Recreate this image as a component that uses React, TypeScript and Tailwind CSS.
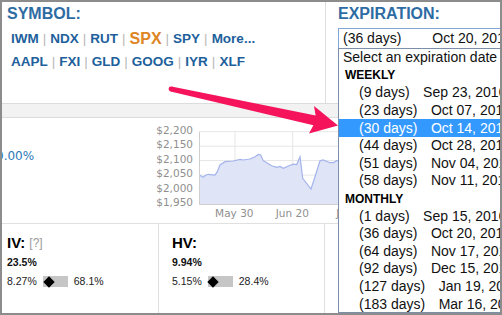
import React from 'react';

const row1 = ['IWM', 'NDX', 'RUT', 'SPX', 'SPY', 'More...'];
const row2 = ['AAPL', 'FXI', 'GLD', 'GOOG', 'IYR', 'XLF'];

const weekly = [
  { days: 9, date: 'Sep 23, 2016' },
  { days: 23, date: 'Oct 07, 2016' },
  { days: 30, date: 'Oct 14, 2016' },
  { days: 44, date: 'Oct 28, 2016' },
  { days: 51, date: 'Nov 04, 2016' },
  { days: 58, date: 'Nov 11, 2016' },
];

const monthly = [
  { days: 1, date: 'Sep 15, 2016' },
  { days: 36, date: 'Oct 20, 2016' },
  { days: 64, date: 'Nov 17, 2016' },
  { days: 92, date: 'Dec 15, 2016' },
  { days: 127, date: 'Jan 19, 2017' },
  { days: 183, date: 'Mar 16, 2017' },
];

const line =
  '199.3,175 203.3,177.3 205,175.5 208.3,174.3 215,175 217.3,171.7 220,165 225,161.7 233.3,161 240,159.3 243.3,160 246.7,159.5 250,159 255,156.7 258.3,154.5 260.7,155 263.3,160.7 266.7,162.7 271.7,165.7 276.7,167.3 280,166.5 283.3,168.3 288.3,166 293.3,164.2 296.7,164.5 300,156.7 302.7,178.3 311,189 315,176.7 320,160.7 323,160 330,162.7 333.3,162.7 336.7,160.7 345,160 365,161';

const gridY = [131.7, 146.2, 160.6, 175.1, 189.5, 204];
const yLabels = ['$2,200', '$2,150', '$2,100', '$2,050', '$2,000', '$1,950'];

function SymbolRow({ items }: { items: string[] }) {
  return (
    <div className="flex items-center h-[23px] leading-[23px] pl-[4px] text-[13.5px] font-bold text-[#215f9c]">
      {items.map((s, i) => (
        <React.Fragment key={s}>
          {i > 0 && <span className="mx-[4px] font-normal text-[#b8b8b8]">|</span>}
          <span className={s === 'SPX' ? 'text-[16px] text-[#de8623]' : ''}>{s}</span>
        </React.Fragment>
      ))}
    </div>
  );
}

function RangeBar({ pct }: { pct: number }) {
  return (
    <div className="relative w-[25px] h-[11px] bg-[#c6c6c6] mx-[6px]">
      <div
        className="absolute top-[1.5px] w-[8px] h-[8px] bg-black rotate-45"
        style={{ left: `calc(${pct}% - 4px)` }}
      />
    </div>
  );
}

function VolBlock({ label, help, value, low, high }: { label: string; help?: boolean; value: number; low: string; high: string }) {
  const pct = ((value - parseFloat(low)) / (parseFloat(high) - parseFloat(low))) * 100;
  return (
    <div className="pt-[9px]">
      <div className="h-[20px] flex items-center">
        <span className="text-[15px] font-bold text-black">{label}</span>
        {help && <span className="ml-[4px] text-[12px] text-[#9a9a9a]">[?]</span>}
      </div>
      <div className="h-[19px] flex items-center text-[10.5px] font-bold text-[#111]">{value}%</div>
      <div className="h-[19px] flex items-center text-[10.5px] text-[#222]">
        <span>{low}</span>
        <RangeBar pct={pct} />
        <span>{high}</span>
      </div>
    </div>
  );
}

function Option({ days, date, selected }: { days: number; date: string; selected?: boolean }) {
  return (
    <div
      className={`h-[17.6px] flex items-center pl-[20px] whitespace-nowrap ${
        selected ? 'bg-[#3399ff] text-white' : 'text-[#111]'
      }`}
    >
      <span>({days} days)</span>
      <span className="ml-[13.5px]">{date}</span>
    </div>
  );
}

export default function App() {
  return (
    <div
      className="relative w-[502px] h-[315px] overflow-hidden border-2 border-[#8c8c8c] bg-white"
      style={{ fontFamily: '"Liberation Sans", Arial, sans-serif' }}
    >
      {/* top: symbol + expiration */}
      <div className="flex h-[101px]">
        <div className="w-[324px] shrink-0 border-r border-[#dedede] pl-[5px] pt-[3px]">
          <div className="h-[18px] leading-[18px] text-[16px] font-bold text-[#2d6ca3]">SYMBOL:</div>
          <div className="mt-[4px]">
            <SymbolRow items={row1} />
            <SymbolRow items={row2} />
          </div>
        </div>
        <div className="flex-1 min-w-0 pl-[12px] pt-[3px]">
          <div className="h-[18px] leading-[18px] text-[16px] font-bold text-[#2d6ca3] whitespace-nowrap">EXPIRATION:</div>
          <div className="mt-[5px] w-[200px] h-[21px] border border-[#7ea6d8] flex items-center pl-[4px] text-[14px] text-[#111] whitespace-nowrap">
            <span>(36 days)</span>
            <span className="ml-[31px]">Oct 20, 2016</span>
          </div>
        </div>
      </div>

      {/* grey band */}
      <div className="h-[15px] bg-[#f2f2f2] border-t border-b border-[#dcdcdc]" />

      {/* middle: change + chart */}
      <div className="flex h-[105px]">
        <div className="w-[148px] shrink-0 pt-[31px]">
          <div
            className="-ml-[6px] text-[12px] leading-[14px] text-[#2a78b8]"
            style={{ fontFamily: '"DejaVu Sans", Verdana, sans-serif' }}
          >
            0.00%
          </div>
        </div>
        <svg width="215" height="105" viewBox="150 118 215 105" style={{ fontFamily: '"DejaVu Sans", Verdana, sans-serif' }}>
          {gridY.map((y) => (
            <line key={y} x1="199.5" x2="365" y1={y} y2={y} stroke="#e6e6e6" strokeWidth="1" />
          ))}
          {[235, 292.7, 350.4].map((x) => (
            <line key={x} x1={x} x2={x} y1="131.7" y2="204" stroke="#e6e6e6" strokeWidth="1" />
          ))}
          <polygon points={`${line} 365,204 199.3,204`} fill="#dfe4f7" />
          <polyline points={line} fill="none" stroke="#a3b3ec" strokeWidth="1.2" />
          <line x1="199.5" x2="199.5" y1="131.7" y2="204.5" stroke="#cfcfcf" />
          <line x1="199.5" x2="365" y1="204.5" y2="204.5" stroke="#cfcfcf" />
          {yLabels.map((t, i) => (
            <text key={t} x="193" y={gridY[i] + 2.2} textAnchor="end" fontSize="10.5" fill="#8f8f8f">
              {t}
            </text>
          ))}
          <text x="234.3" y="216.5" textAnchor="middle" fontSize="10.5" fill="#8f8f8f">May 30</text>
          <text x="292.3" y="216.5" textAnchor="middle" fontSize="10.5" fill="#8f8f8f">Jun 20</text>
          <text x="351" y="216.5" textAnchor="middle" fontSize="10.5" fill="#8f8f8f">Jul 11</text>
        </svg>
      </div>

      {/* bottom: IV / HV */}
      <div className="flex h-[90px] border-t border-[#e0e0e0]">
        <div className="w-[157px] shrink-0 border-r border-[#e0e0e0] pl-[5px]">
          <VolBlock label="IV:" help value={23.5} low="8.27%" high="68.1%" />
        </div>
        <div className="w-[166px] shrink-0 border-r border-[#e0e0e0] pl-[13px]">
          <VolBlock label="HV:" value={9.94} low="5.15%" high="28.4%" />
        </div>
      </div>

      {/* open expiration list */}
      <div className="absolute left-[336px] top-[46px] w-[175px] h-[265px] border border-[#7b8fab] bg-white text-[14px] overflow-hidden">
        <div className="h-[17.6px] flex items-center pl-[4px] text-[#111] whitespace-nowrap">Select an expiration date</div>
        <div className="h-[17.6px] flex items-center pl-[6px] text-[12px] font-bold text-black">WEEKLY</div>
        {weekly.map((o) => (
          <Option key={o.days} days={o.days} date={o.date} selected={o.days === 30} />
        ))}
        <div className="h-[17.6px] flex items-center pl-[6px] text-[12px] font-bold text-black">MONTHLY</div>
        {monthly.map((o) => (
          <Option key={o.days} days={o.days} date={o.date} />
        ))}
      </div>

      {/* annotation arrow */}
      <svg className="absolute left-0 top-0 pointer-events-none" width="498" height="311" viewBox="2 2 498 311">
        <circle cx="171" cy="89" r="2.4" fill="#f5145b" />
        <polygon
          points="171.5,86.6 315.6,115.5 314,106 338,125.5 309,133.5 313.4,125.3 170.5,91.4"
          fill="#f5145b"
        />
      </svg>
    </div>
  );
}
